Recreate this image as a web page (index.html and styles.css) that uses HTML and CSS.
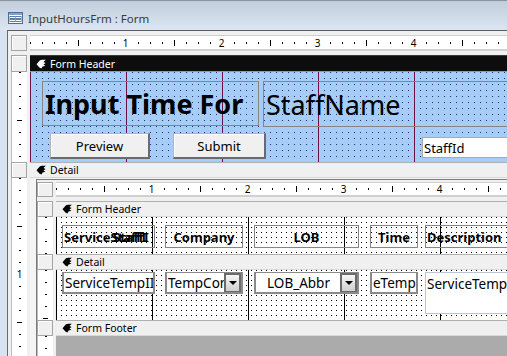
FILE: index.html
```html
<!DOCTYPE html>
<html lang="en">
<head>
    <meta charset="UTF-8">
    <meta name="viewport" content="width=device-width, initial-scale=1.0">
    <title>InputHoursFrm : Form</title>
    <link rel="stylesheet" href="styles.css">
</head>
<body>
    <div class="window">
        <div class="titlebar">
            <svg class="form-icon" width="15" height="12" viewBox="0 0 15 12">
                <rect x="0.5" y="0.5" width="14" height="11" fill="#fff" stroke="#4d6f95"/>
                <rect x="1" y="1" width="13" height="2" fill="#7fa3c9"/>
                <rect x="2" y="4.5" width="5" height="2" fill="none" stroke="#5a7ea6" stroke-width="1"/>
                <rect x="8" y="4.5" width="5" height="2" fill="none" stroke="#5a7ea6" stroke-width="1"/>
                <rect x="2" y="7.5" width="5" height="2" fill="none" stroke="#5a7ea6" stroke-width="1"/>
                <rect x="8" y="7.5" width="5" height="2" fill="none" stroke="#5a7ea6" stroke-width="1"/>
            </svg>
            <span>InputHoursFrm : Form</span>
        </div>

        <div class="client">
            <div class="designer">
                <div class="corner"></div>
                <div class="hruler">
                    <div class="inch"><span>1</span></div>
                    <div class="inch"><span>2</span></div>
                    <div class="inch"><span>3</span></div>
                    <div class="inch"><span>4</span></div>
                    <div class="inch"><span>5</span></div>
                </div>

                <div class="selector"></div>
                <div class="bar selected">
                    <svg class="bar-icon" width="10" height="10" viewBox="0 0 10 10"><path d="M0.5 5.2 L4 1.2 L6 0.8 L9.8 0.8 L7.4 3 L9.6 4 L7.4 5.4 L9.4 6.8 L6.6 7.6 L5.4 9.4 L3.4 8.6 Z"/></svg>
                    Form Header
                </div>

                <div class="vruler">
                    <div class="vinch"></div>
                </div>
                <div class="section main-header">
                    <div class="title-row">
                        <div class="label big-label">Input Time For</div>
                        <div class="textbox big-box">StaffName</div>
                    </div>
                    <div class="button-row">
                        <button class="cmd preview">Preview</button>
                        <button class="cmd submit">Submit</button>
                        <div class="textbox staff-id">StaffId</div>
                    </div>
                </div>

                <div class="selector"></div>
                <div class="bar">
                    <svg class="bar-icon" width="10" height="10" viewBox="0 0 10 10"><path d="M0.5 5.2 L4 1.2 L6 0.8 L9.8 0.8 L7.4 3 L9.6 4 L7.4 5.4 L9.4 6.8 L6.6 7.6 L5.4 9.4 L3.4 8.6 Z"/></svg>
                    Detail
                </div>

                <div class="vruler">
                    <div class="vinch"><span>1</span></div>
                    <div class="vinch"></div>
                </div>
                <div class="main-detail">
                    <div class="subform">
                        <div class="corner"></div>
                        <div class="hruler">
                            <div class="inch"><span>1</span></div>
                            <div class="inch"><span>2</span></div>
                            <div class="inch"><span>3</span></div>
                            <div class="inch"><span>4</span></div>
                            <div class="inch"><span>5</span></div>
                        </div>

                        <div class="selector"></div>
                        <div class="bar">
                            <svg class="bar-icon" width="10" height="10" viewBox="0 0 10 10"><path d="M0.5 5.2 L4 1.2 L6 0.8 L9.8 0.8 L7.4 3 L9.6 4 L7.4 5.4 L9.4 6.8 L6.6 7.6 L5.4 9.4 L3.4 8.6 Z"/></svg>
                            Form Header
                        </div>
                        <div class="vruler">
                            <div class="vinch"></div>
                        </div>
                        <div class="section sub-section">
                            <div class="fields head-fields">
                                <div class="label col1 left">ServiceStaffI<span class="overlap">StaffI</span></div>
                                <div class="label col2">Company</div>
                                <div class="label col3">LOB</div>
                                <div class="label col4">Time</div>
                                <div class="label col5 left">Description</div>
                            </div>
                        </div>

                        <div class="selector"></div>
                        <div class="bar">
                            <svg class="bar-icon" width="10" height="10" viewBox="0 0 10 10"><path d="M0.5 5.2 L4 1.2 L6 0.8 L9.8 0.8 L7.4 3 L9.6 4 L7.4 5.4 L9.4 6.8 L6.6 7.6 L5.4 9.4 L3.4 8.6 Z"/></svg>
                            Detail
                        </div>
                        <div class="vruler">
                            <div class="vinch"></div>
                        </div>
                        <div class="section sub-section">
                            <div class="fields detail-fields">
                                <div class="field col1">ServiceTempII</div>
                                <div class="field combo col2"><span class="combo-text">TempCon</span><span class="drop"></span></div>
                                <div class="field combo col3"><span class="combo-text center">LOB_Abbr</span><span class="drop"></span></div>
                                <div class="field col4">eTemp</div>
                                <div class="field memo col5">ServiceTemp</div>
                            </div>
                        </div>

                        <div class="selector"></div>
                        <div class="bar">
                            <svg class="bar-icon" width="10" height="10" viewBox="0 0 10 10"><path d="M0.5 5.2 L4 1.2 L6 0.8 L9.8 0.8 L7.4 3 L9.6 4 L7.4 5.4 L9.4 6.8 L6.6 7.6 L5.4 9.4 L3.4 8.6 Z"/></svg>
                            Form Footer
                        </div>
                        <div class="vruler">
                            <div class="vinch"></div>
                        </div>
                        <div class="outside"></div>
                    </div>
                </div>
            </div>
        </div>
    </div>
</body>
</html>
```

FILE: styles.css
```css
* {
    box-sizing: border-box;
}
body {
    margin: 0;
    width: 507px;
    height: 356px;
    overflow: hidden;
    background-color: #d7e3f0;
    font-family: "Noto Sans", "Open Sans", sans-serif;
}
.window {
    width: 507px;
    height: 356px;
    display: flex;
    flex-direction: column;
    overflow: hidden;
}
.titlebar {
    height: 30px;
    flex: none;
    display: flex;
    align-items: center;
    gap: 5px;
    padding: 5px 0 0 8px;
    background: linear-gradient(#c2cedb, #dbe6f2);
    border-top: 1px solid #8995a2;
    color: #3a3a3a;
    font-size: 11.5px;
}
.client {
    flex: 1;
    width: 620px;
    margin-left: 7px;
    padding: 4px 0 0 3px;
    background-color: #f0f0f0;
    border-left: 1px solid #6c6c6c;
    border-top: 1px solid #5e5e5e;
    overflow: hidden;
}

/* designer grid: ruler column + section column */
.designer {
    display: grid;
    grid-template-columns: 16px 580px;
    grid-template-rows: 20px 17px 90px 16px 200px;
    column-gap: 3px;
}
.corner,
.selector {
    background-color: #f0f0f0;
    border: 1px solid #a5a5a5;
    box-shadow: inset 1px 1px #fff;
}
.corner {
    height: 16px;
}
.hruler {
    height: 16px;
    display: flex;
    background-color: #fff;
    border-top: 1px solid #cfcfcf;
    border-bottom: 2px solid #d0d0d0;
    font-size: 10px;
    overflow: hidden;
}
.inch {
    flex: none;
    width: 96px;
    display: flex;
    justify-content: flex-end;
    align-items: center;
    background:
        linear-gradient(#000, #000) 48px 50% / 1px 6px no-repeat,
        linear-gradient(to right, #000 1px, transparent 1px) 12px 50% / 12px 2px repeat-x;
}
.inch span {
    position: relative;
    z-index: 1;
    width: 9px;
    margin-right: -4px;
    text-align: center;
    line-height: 10px;
    background-color: #fff;
}
.vruler {
    background-color: #fff;
    border-left: 1px solid #bdbdbd;
    overflow: hidden;
    font-size: 10px;
}
.vinch {
    height: 96px;
    display: flex;
    flex-direction: column;
    justify-content: flex-end;
    align-items: center;
    background:
        linear-gradient(#000, #000) 50% 48px / 5px 1px no-repeat,
        linear-gradient(#000 1px, transparent 1px) 50% 12px / 2px 12px repeat-y;
}
.vinch span {
    position: relative;
    z-index: 1;
    height: 11px;
    margin-bottom: -6px;
    line-height: 11px;
    background-color: #fff;
}

/* section bars */
.bar {
    display: flex;
    align-items: center;
    gap: 4px;
    padding-left: 6px;
    background-color: #f0f0f0;
    border-top: 1px solid #b0b0b0;
    border-bottom: 1px solid #d8d8d8;
    color: #000;
    font-size: 10.5px;
}
.bar.selected {
    background-color: #0d0d0d;
    border-top-color: #3a3a3a;
    border-bottom: 1px solid #9a9a9a;
    color: #fff;
}
.bar-icon {
    fill: currentColor;
}

/* sections with grid dots and inch lines */
.section {
    position: relative;
}
.section::before {
    content: "";
    position: absolute;
    inset: 0;
    background: repeating-linear-gradient(to right, var(--dot) 0 1px, transparent 1px var(--step));
    -webkit-mask: repeating-linear-gradient(to bottom, #000 0 1px, transparent 1px var(--step));
    mask: repeating-linear-gradient(to bottom, #000 0 1px, transparent 1px var(--step));
}
.section > * {
    position: relative;
}
.main-header {
    --dot: #2a2a78;
    --step: 6px;
    background:
        linear-gradient(to right, #7a0a3e 1px, transparent 1px) 0 0 / 96px 100% repeat-x,
        #a6cdf6;
    display: flex;
    flex-direction: column;
}
.title-row {
    display: flex;
    gap: 4px;
    padding: 9px 0 0 12px;
}
.label {
    display: flex;
    align-items: center;
    justify-content: center;
    border: 1px solid #858585;
    color: #000;
    white-space: nowrap;
    overflow: hidden;
}
.textbox {
    display: flex;
    align-items: center;
    border: 1px solid #858585;
    color: #000;
    white-space: nowrap;
}
.big-label {
    width: 217px;
    height: 45px;
    justify-content: flex-start;
    padding-left: 2px;
    font-size: 27px;
    font-weight: bold;
}
.big-box {
    width: 300px;
    height: 46px;
    padding-left: 2px;
    font-size: 27px;
}
.button-row {
    display: flex;
    align-items: flex-end;
    padding: 6px 0 0 20px;
}
.cmd {
    height: 26px;
    padding: 0;
    background-color: #f0f0f0;
    border: 1px solid #b4b4b4;
    border-right: 2px solid #6b6b6b;
    border-bottom: 2px solid #6b6b6b;
    box-shadow: inset 1px 1px #fff;
    font-family: inherit;
    font-size: 13px;
    color: #000;
}
.preview {
    width: 100px;
}
.submit {
    width: 93px;
    margin-left: 23px;
}
.staff-id {
    width: 120px;
    height: 21px;
    margin: 0 0 1px 156px;
    padding-left: 1px;
    background-color: #fff;
    border-color: #a9a9a9;
    font-size: 13px;
}

/* main detail holds the subform control */
.main-detail {
    background-color: #f4f4f4;
    padding: 1px 0 0 6px;
}
.subform {
    display: grid;
    grid-template-columns: 16px 560px;
    grid-template-rows: 19px 16px 37px 16px 50px 16px 40px;
    column-gap: 3px;
    padding-top: 2px;
    border-left: 1px solid #7a7a7a;
    border-top: 1px solid #7a7a7a;
    background-color: #f0f0f0;
}
.subform .corner,
.subform .hruler {
    height: 15px;
}
.sub-section {
    --dot: #000;
    --step: 5px;
    background:
        linear-gradient(to right, #000 1px, transparent 1px) 0 0 / 96px 100% repeat-x,
        #fff;
}
.fields {
    display: flex;
    align-items: flex-start;
}
.head-fields {
    padding-top: 8px;
}
.head-fields .label {
    height: 23px;
    font-size: 13px;
    font-weight: bold;
}
.label.left {
    justify-content: flex-start;
    padding-left: 1px;
}
.col1 { width: 93px; margin-left: 6px; }
.col2 { width: 78px; margin-left: 10px; }
.col3 { width: 105px; margin-left: 11px; }
.col4 { width: 48px; margin-left: 11px; }
.col5 { width: 100px; margin-left: 7px; }
.overlap {
    position: absolute;
    left: 50px;
    top: 2px;
}
.head-fields .col1 {
    position: relative;
}
.detail-fields {
    padding-top: 2px;
}
.field {
    height: 22px;
    display: flex;
    align-items: center;
    padding-left: 1px;
    background-color: #fff;
    border: 2px solid #8a8a8a;
    border-top-width: 1px;
    font-size: 13.5px;
    color: #000;
    white-space: nowrap;
    overflow: hidden;
}
.combo {
    padding-right: 0;
}
.combo-text {
    flex: 1;
    overflow: hidden;
}
.combo-text.center {
    text-align: center;
}
.drop {
    flex: none;
    width: 17px;
    height: 20px;
    display: flex;
    align-items: center;
    justify-content: center;
    background: linear-gradient(#f6f6f6, #cfcfcf);
    border: 2px solid #6a6a6a;
}
.drop::after {
    content: "";
    border-left: 4px solid transparent;
    border-right: 4px solid transparent;
    border-top: 4px solid #000;
}
.memo {
    height: 42px;
    align-items: flex-start;
    padding-top: 2px;
    border: 1px solid #b8c4d6;
}
.outside {
    background-color: #ababab;
}
```
